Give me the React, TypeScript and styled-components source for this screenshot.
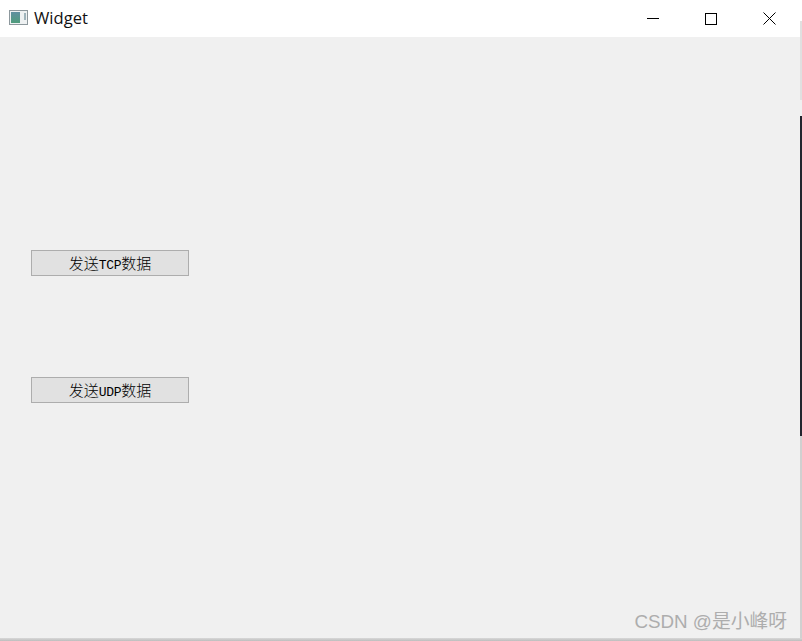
import React from "react";
import styled, { createGlobalStyle } from "styled-components";

const Global = createGlobalStyle`
  html, body { margin: 0; padding: 0; background: #fff; }
  #root { width: 802px; height: 641px; overflow: hidden; }
`;

const Screen = styled.div`
  width: 802px;
  height: 641px;
  display: flex;
  flex-direction: column;
  position: relative;
  overflow: hidden;
`;

const Upper = styled.div`
  flex: 1;
  display: flex;
  min-height: 0;
`;

const Win = styled.div`
  flex: 1;
  display: flex;
  flex-direction: column;
  min-width: 0;
`;

const TitleBar = styled.div`
  height: 37px;
  flex: none;
  background: #fff;
  display: flex;
  align-items: center;
  padding-left: 9px;
`;

const AppIcon = styled.svg`
  width: 19px;
  height: 15px;
  flex: none;
  margin-bottom: 2px;
`;

const Title = styled.span`
  margin-left: 6px;
  margin-bottom: 2px;
  font: 16.6px "Open Sans", "Noto Sans", sans-serif;
  color: #111;
  flex: 1;
`;

const WinButtons = styled.div`
  display: flex;
  align-items: center;
  margin-right: 1px;
`;

const WinButton = styled.div`
  width: 58.5px;
  height: 37px;
  display: flex;
  align-items: center;
  justify-content: center;
  svg { display: block; }
`;

const Content = styled.div`
  flex: 1;
  background: #f0f0f0;
  display: flex;
  flex-direction: column;
  align-items: flex-start;
  gap: 101px;
  padding: 213px 0 0 31px;
`;

const Button = styled.button`
  width: 158px;
  height: 26px;
  box-sizing: border-box;
  border: 1px solid #adadad;
  background: #e1e1e1;
  padding: 0;
  display: flex;
  align-items: center;
  justify-content: center;
  color: #000;
`;

const Label = styled.span`
  font: 15px "Noto Sans CJK SC", sans-serif;
  line-height: 24px;
  font-weight: 300;
  white-space: nowrap;
`;

const Latin = styled.span`
  font: 13px "Liberation Mono", monospace;
  letter-spacing: -0.3px;
`;

const Edge = styled.div`
  width: 2px;
  flex: none;
  display: flex;
  flex-direction: column;
`;

const EdgePart = styled.div<{ $h: number; $c: string }>`
  height: ${(p) => p.$h}px;
  flex: none;
  background: ${(p) => p.$c};
`;

const EdgeRest = styled.div`
  flex: 1;
  background: #d0d0d0;
`;

const BottomEdge = styled.div`
  height: 3px;
  flex: none;
  background: linear-gradient(#d8d8d8, #bdbdbd);
`;

const Watermark = styled.div`
  position: absolute;
  right: 15px;
  bottom: 8px;
  font: 18.8px "Liberation Sans", "Noto Sans CJK SC", sans-serif;
  color: #adadad;
  white-space: nowrap;
`;

export default function App() {
  return (
    <Screen>
      <Global />
      <Upper>
        <Win>
          <TitleBar>
            <AppIcon viewBox="0 0 19 15">
              <rect x="0.5" y="0.5" width="18" height="14" fill="#eef1f2" stroke="#8d989d" />
              <defs>
                <linearGradient id="g" x1="0" y1="0" x2="0" y2="1">
                  <stop offset="0" stopColor="#5f8fa0" />
                  <stop offset="1" stopColor="#4f9c7c" />
                </linearGradient>
              </defs>
              <rect x="2" y="2" width="9" height="11" fill="url(#g)" />
              <rect x="15" y="3" width="2" height="7" fill="#9fb4bb" />
            </AppIcon>
            <Title>Widget</Title>
            <WinButtons>
              <WinButton>
                <svg width="12" height="12" viewBox="0 0 12 12">
                  <path d="M0 5.5H12" stroke="#000" strokeWidth="1" />
                </svg>
              </WinButton>
              <WinButton>
                <svg width="12" height="12" viewBox="0 0 12 12">
                  <rect x="0.5" y="0.5" width="11" height="11" fill="none" stroke="#000" />
                </svg>
              </WinButton>
              <WinButton>
                <svg width="13" height="13" viewBox="0 0 13 13">
                  <path d="M0.5 0.5L12.5 12.5M12.5 0.5L0.5 12.5" stroke="#000" strokeWidth="1" />
                </svg>
              </WinButton>
            </WinButtons>
          </TitleBar>
          <Content>
            <Button><Label>发送<Latin>TCP</Latin>数据</Label></Button>
            <Button><Label>发送<Latin>UDP</Latin>数据</Label></Button>
          </Content>
        </Win>
        <Edge>
          <EdgePart $h={21} $c="#ffffff" />
          <EdgePart $h={79} $c="#e0e0e0" />
          <EdgePart $h={16} $c="#f0f0f0" />
          <EdgePart $h={320} $c="#22252e" />
          <EdgeRest />
        </Edge>
      </Upper>
      <BottomEdge />
      <Watermark>CSDN @是小峰呀</Watermark>
    </Screen>
  );
}
